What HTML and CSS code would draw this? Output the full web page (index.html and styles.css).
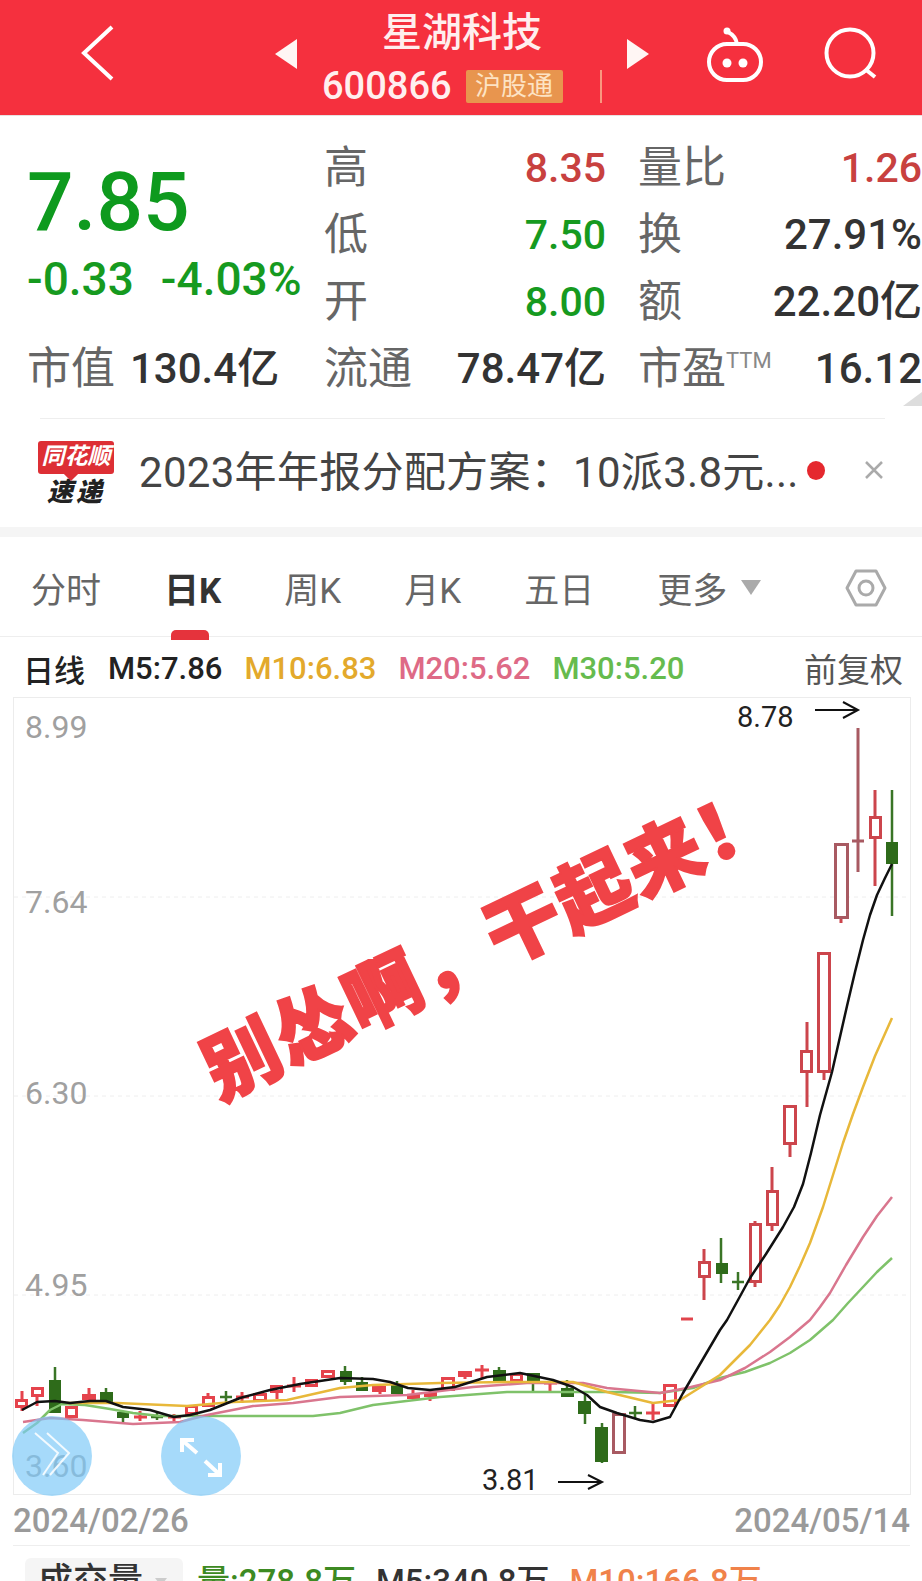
FILE: index.html
```html
<!DOCTYPE html>
<html lang="zh-CN">

<head>
    <meta charset="UTF-8">
    <meta name="viewport" content="width=device-width, initial-scale=1.0">
    <title>星湖科技</title>
    <link rel="stylesheet" href="styles.css">
</head>

<body>
    <div class="page">
        <header class="topbar">
            <svg class="back" width="33" height="56" viewBox="0 0 33 56">
                <path d="M31 2 L3 28 L31 54" />
            </svg>
            <svg class="prev" width="22" height="30" viewBox="0 0 22 30">
                <polygon points="22,0 0,15 22,30" />
            </svg>
            <div class="stock">
                <div class="stock-name">星湖科技</div>
                <div class="stock-sub">
                    <span class="stock-code">600866</span>
                    <span class="stock-tag">沪股通</span>
                    <span class="stock-divider"></span>
                </div>
            </div>
            <svg class="next" width="22" height="30" viewBox="0 0 22 30">
                <polygon points="0,0 22,15 0,30" />
            </svg>
            <svg class="robot" width="58" height="56" viewBox="0 0 58 56">
                <rect x="3" y="17" width="52" height="36" rx="18" />
                <path d="M31 17 C30 10 26 7 22 5" />
                <circle class="dot" cx="21" cy="4" r="3.5" />
                <circle class="dot" cx="21" cy="36" r="4.5" />
                <circle class="dot" cx="37" cy="36" r="4.5" />
            </svg>
            <svg class="search" width="56" height="56" viewBox="0 0 56 56">
                <circle cx="26" cy="26" r="23.5" />
                <path d="M41 42 L51 50" />
            </svg>
        </header>

        <section class="quote">
            <div class="price-box">
                <div class="price">7.85</div>
                <div class="change"><span>-0.33</span><span>-4.03%</span></div>
            </div>
            <div class="cell"><span class="label">高</span><span class="value red">8.35</span></div>
            <div class="cell side"><span class="label">量比</span><span class="value red">1.26</span></div>
            <div class="cell"><span class="label">低</span><span class="value green">7.50</span></div>
            <div class="cell side"><span class="label">换</span><span class="value">27.91%</span></div>
            <div class="cell"><span class="label">开</span><span class="value green">8.00</span></div>
            <div class="cell side"><span class="label">额</span><span class="value">22.20亿</span></div>
            <div class="cell first"><span class="label">市值</span><span class="value">130.4亿</span></div>
            <div class="cell"><span class="label">流通</span><span class="value">78.47亿</span></div>
            <div class="cell side"><span class="label">市盈<sup>TTM</sup></span><span class="value">16.12</span></div>
            <div class="corner"></div>
        </section>
        <div class="quote-line"></div>

        <section class="news">
            <div class="logo">
                <div class="logo-top">同花顺</div>
                <div class="logo-bottom">速递</div>
            </div>
            <div class="news-text">2023年年报分配方案：10派3.8元...</div>
            <span class="news-dot"></span>
            <svg class="news-close" width="20" height="20" viewBox="0 0 20 20">
                <path d="M2 2 L18 18 M18 2 L2 18" />
            </svg>
        </section>

        <nav class="tabs">
            <span class="tab">分时</span>
            <span class="tab active">日K</span>
            <span class="tab">周K</span>
            <span class="tab">月K</span>
            <span class="tab">五日</span>
            <span class="tab">更多<i class="caret"></i></span>
            <svg class="settings" width="42" height="40" viewBox="0 0 42 40">
                <polygon points="2,20 11,3 31,3 40,20 31,37 11,37" />
                <circle cx="21" cy="20" r="7" />
            </svg>
        </nav>

        <div class="ma-row">
            <span class="ma-title">日线</span>
            <span class="ma m5">M5:7.86</span>
            <span class="ma m10">M10:6.83</span>
            <span class="ma m20">M20:5.62</span>
            <span class="ma m30">M30:5.20</span>
            <span class="adjust">前复权</span>
        </div>

        <svg class="chart" width="922" height="798" viewBox="0 697 922 798">
            <rect class="frame" x="13.5" y="697.5" width="897" height="797" />
            <path class="grid-line" d="M14 897H910 M14 1096H910 M14 1295H910" />

            <text class="axis" x="25" y="738">8.99</text>
            <text class="axis" x="25" y="913">7.64</text>
            <text class="axis" x="25" y="1104">6.30</text>
            <text class="axis" x="25" y="1296">4.95</text>
            <text class="axis" x="25" y="1477">3.60</text>

            <text class="slogan" x="492" y="980" transform="rotate(-25.5 466 953)">别怂啊，干起来！</text>

            <!-- wicks -->
            <path class="wick up-bright" d="M22 1391V1411 M37 1387V1406 M89 1388V1400 M140 1411V1421 M134 1417H147 M174 1414V1421 M168 1417H181 M208 1393V1400 M242 1392V1403 M236 1397H249 M277 1390V1399 M294 1377V1392 M287 1386H301 M465 1371V1379 M482 1365V1379 M475 1370H489 M430 1392V1401 M413 1390V1399 M380 1392V1394 M550 1382V1391 M544 1383H557 M653 1402V1420 M646 1413H660" />
            <path class="wick up" d="M704 1249V1300 M755 1221V1287 M772 1167V1231 M790 1145V1157 M807 1022V1107 M824 1073V1080 M841 919V923 M875 790V886" />
            <path class="wick up-dim" d="M858 728V872 M852 841H864" />
            <path class="dash" d="M681 1319H693" />
            <path class="wick down" d="M55 1367V1380 M106 1388V1404 M123 1418V1422 M157 1413V1420 M151 1417H163 M226 1391V1403 M220 1397H232 M345 1366V1385 M362 1377V1382 M397 1381V1385 M499 1367V1370 M533 1382V1391 M567 1380V1388 M585 1394V1424 M602 1423V1463 M635 1406V1418 M629 1413H642 M721 1238V1283 M738 1272V1290 M732 1282H744 M892 790V916" />

            <!-- green bodies -->
            <g class="body-down">
                <rect x="49" y="1380" width="12" height="33" />
                <rect x="100" y="1392" width="13" height="10" />
                <rect x="117" y="1412" width="12" height="6" />
                <rect x="340" y="1371" width="12" height="11" />
                <rect x="356" y="1382" width="12" height="9" />
                <rect x="391" y="1385" width="12" height="9" />
                <rect x="493" y="1370" width="13" height="12" />
                <rect x="527" y="1373" width="13" height="9" />
                <rect x="561" y="1388" width="13" height="9" />
                <rect x="578" y="1401" width="13" height="13" />
                <rect x="595" y="1427" width="13" height="35" />
                <rect x="716" y="1263" width="12" height="11" />
                <rect x="886" y="842" width="12" height="22" />
            </g>

            <!-- red bodies -->
            <g class="body-up up-bright">
                <rect x="16.5" y="1400.5" width="10" height="6" />
                <rect x="32.5" y="1388.5" width="10" height="7" />
                <rect x="66.5" y="1407.5" width="10" height="9" />
                <rect x="83.5" y="1395.5" width="11" height="3" class="solid" />
                <rect x="186.5" y="1406.5" width="10" height="7" />
                <rect x="203.5" y="1397.5" width="10" height="8" />
                <rect x="254.5" y="1394.5" width="11" height="6" />
                <rect x="271.5" y="1386.5" width="10" height="5" />
                <rect x="306.5" y="1380.5" width="10" height="5" />
                <rect x="322.5" y="1371.5" width="11" height="5" />
                <rect x="373.5" y="1387.5" width="11" height="3" />
                <rect x="408.5" y="1395.5" width="10" height="2" class="solid" />
                <rect x="425.5" y="1393.5" width="10" height="2" class="solid" />
                <rect x="442.5" y="1378.5" width="11" height="11" />
                <rect x="459.5" y="1372.5" width="11" height="3" />
                <rect x="511.5" y="1374.5" width="10" height="6" />
                <rect x="664.5" y="1385.5" width="11" height="20" />
            </g>
            <g class="body-up up">
                <rect x="699.5" y="1262.5" width="10" height="14" />
                <rect x="750.5" y="1224.5" width="10" height="57" />
                <rect x="767.5" y="1191.5" width="10" height="33" />
                <rect x="784.5" y="1106.5" width="11" height="37" />
                <rect x="801.5" y="1051.5" width="10" height="20" />
                <rect x="818.5" y="953.5" width="11" height="118" />
                <rect x="870.5" y="817.5" width="10" height="20" />
            </g>
            <g class="body-up up-dim">
                <rect x="613.5" y="1414.5" width="11" height="38" />
                <rect x="835.5" y="844.5" width="12" height="73" />
            </g>

            <!-- moving averages -->
            <polyline class="ma-line l30" points="23,1433 37,1423 50,1410 62,1404 85,1405 110,1409 133,1413 160,1416 207,1416 313,1416 340,1413 373,1405 440,1397 507,1392 573,1392 613,1392 660,1393 693,1388 720,1378 745,1372 770,1363 790,1353 810,1340 833,1320 848,1303 863,1287 877,1272 892,1258" />
            <polyline class="ma-line l20" points="23,1422 50,1418 83,1420 133,1424 180,1422 207,1415 253,1406 293,1403 340,1397 407,1395 473,1387 527,1383 583,1383 607,1388 660,1393 687,1388 720,1380 745,1368 770,1352 790,1337 810,1320 820,1307 830,1293 846,1265 863,1237 877,1216 892,1197" />
            <polyline class="ma-line l10" points="67,1403 117,1403 187,1406 233,1402 287,1400 340,1388 373,1385 440,1383 507,1382 573,1382 607,1392 653,1403 680,1400 720,1375 750,1345 770,1320 780,1305 790,1287 800,1266 810,1243 823,1207 833,1175 843,1143 853,1114 863,1087 875,1056 892,1018" />
            <polyline class="ma-line l5" points="22,1410 37,1402 55,1401 70,1403 90,1401 106,1401 123,1407 150,1410 174,1417 190,1415 210,1410 240,1398 270,1390 300,1384 340,1378 373,1379 390,1382 408,1388 430,1390 455,1387 487,1377 520,1373 553,1380 573,1387 587,1395 600,1407 617,1413 640,1420 653,1422 670,1417 683,1393 720,1330 727,1320 738,1300 750,1278 766,1254 783,1227 794,1207 803,1184 811,1153 820,1115 832,1072 847,1006 855,972 863,940 870,915 877,895 885,878 892,864" />

            <!-- high and low marks -->
            <text class="mark" x="737" y="727">8.78</text>
            <path class="mark-arrow" d="M815 710H858 M843 702L858 710L843 718" />
            <text class="mark" x="482" y="1490">3.81</text>
            <path class="mark-arrow" d="M558 1482H602 M588 1475L602 1482L588 1489" />

            <!-- floating buttons -->
            <circle class="float" cx="52" cy="1456" r="40" />
            <circle class="float" cx="201" cy="1456" r="40" />
            <path class="float-icon thin" d="M35 1433L58 1453L43 1475 M47 1433L69 1453L50 1475" />
            <path class="float-icon" d="M197 1453L183 1441 M194 1440H182V1452 M205 1461L219 1474 M220 1463V1475H208" />
        </svg>

        <div class="dates">
            <span>2024/02/26</span>
            <span>2024/05/14</span>
        </div>

        <div class="volume">
            <div class="volume-select">成交量<i class="caret small"></i></div>
            <span class="vol green-dark">量:278.8万</span>
            <span class="vol">M5:340.8万</span>
            <span class="vol orange">M10:166.8万</span>
        </div>
    </div>
</body>

</html>
```

FILE: styles.css
```css
body {
    margin: 0;
    background-color: white;
    font-family: Roboto, "Noto Sans CJK SC", sans-serif;
}

.page {
    width: 922px;
    height: 1581px;
    overflow: hidden;
}

/* top bar */
.topbar {
    display: flex;
    align-items: flex-start;
    height: 116px;
    background-color: #f5303e;
    border-bottom: 1px solid #e8e0e0;
    box-sizing: border-box;
    color: white;
}

.back {
    margin: 25px 0 0 81px;
    fill: none;
    stroke: white;
    stroke-width: 4;
}

.prev {
    margin: 39px 0 0 161px;
    fill: #fff6f4;
}

.next {
    margin-top: 39px;
    fill: #fff6f4;
}

.stock {
    width: 330px;
    padding-top: 8px;
}

.stock-name {
    height: 50px;
    font-size: 40px;
    line-height: 50px;
    font-weight: 500;
    text-align: center;
    color: #ffeeee;
}

.stock-sub {
    display: flex;
    align-items: center;
    height: 40px;
    margin-top: 8px;
    padding-left: 25px;
}

.stock-code {
    font-size: 38px;
    font-weight: 500;
    color: #ffefef;
}

.stock-tag {
    margin-left: 14px;
    width: 97px;
    height: 33px;
    background-color: #e8954e;
    color: #fde3c4;
    font-size: 26px;
    line-height: 33px;
    text-align: center;
    border-radius: 2px;
}

.stock-divider {
    margin-left: 37px;
    width: 2px;
    height: 33px;
    background-color: #f9977f;
}

.robot {
    margin: 27px 0 0 57px;
    fill: none;
    stroke: white;
    stroke-width: 4;
}

.robot .dot {
    fill: white;
    stroke: none;
}

.search {
    margin: 27px 0 0 60px;
    fill: none;
    stroke: white;
    stroke-width: 4;
}

/* quote */
.quote {
    position: relative;
    display: grid;
    grid-template-columns: 324px 282px 316px;
    grid-auto-rows: 67px;
    padding-top: 18px;
}

.price-box {
    grid-row: span 3;
    padding-left: 27px;
}

.price {
    height: 123px;
    font-size: 82px;
    line-height: 136px;
    font-weight: 500;
    color: #0e9a1e;
}

.change {
    display: flex;
    gap: 27px;
    font-size: 46px;
    line-height: 44px;
    font-weight: 500;
    white-space: nowrap;
    color: #169a1f;
}

.cell {
    display: flex;
    justify-content: space-between;
    align-items: center;
}

.cell.first {
    justify-content: flex-start;
    gap: 15px;
    padding-left: 27px;
}

.cell.side {
    padding-left: 32px;
}

.label {
    margin-top: -8px;
    font-size: 44px;
    color: #666;
}

.label sup {
    font-size: 22px;
    line-height: 0;
    vertical-align: 16px;
    color: #888;
}

.value {
    font-size: 42px;
    line-height: 44px;
    font-weight: 500;
    color: #333;
}

.value.red {
    font-size: 41px;
    color: #c8413f;
}

.value.green {
    font-size: 41px;
    color: #169a1f;
}

.corner {
    position: absolute;
    right: 0;
    top: 276px;
    width: 19px;
    height: 14px;
    background-color: #ddd;
    clip-path: polygon(100% 0, 100% 100%, 0 100%);
}

.quote-line {
    height: 1px;
    margin: 16px 37px 0 40px;
    background-color: #eee;
}

/* news strip */
.news {
    display: flex;
    align-items: center;
    height: 118px;
    padding: 0 0 4px 38px;
    box-sizing: border-box;
    border-bottom: 10px solid #f5f5f5;
}

.logo {
    width: 76px;
    margin-top: 4px;
    text-align: center;
}

.logo-top {
    position: relative;
    height: 33px;
    background-color: #dd2f35;
    color: white;
    font-size: 23px;
    line-height: 32px;
    font-weight: 700;
    font-style: italic;
    border-radius: 3px;
}

.logo-top::after {
    content: "";
    position: absolute;
    left: 28px;
    bottom: -5px;
    width: 10px;
    height: 10px;
    background-color: #dd2f35;
    transform: rotate(45deg);
}

.logo-bottom {
    margin-top: 4px;
    font-size: 26px;
    line-height: 28px;
    font-weight: 900;
    font-style: italic;
    letter-spacing: 3px;
    color: #222;
}

.news-text {
    width: 668px;
    margin: -5px 0 0 25px;
    font-size: 42px;
    letter-spacing: 0.3px;
    white-space: nowrap;
    color: #444;
}

.news-dot {
    width: 18px;
    height: 19px;
    margin-top: -2px;
    border-radius: 50%;
    background-color: #e5282e;
}

.news-close {
    margin: -2px 0 0 39px;
    fill: none;
    stroke: #aaa;
    stroke-width: 2.5;
}

/* tabs */
.tabs {
    display: flex;
    align-items: center;
    gap: 63px;
    height: 100px;
    padding: 2px 0 0 31px;
    border-bottom: 1px solid #eee;
    box-sizing: border-box;
}

.tab {
    position: relative;
    font-size: 35px;
    color: #666;
    display: flex;
    align-items: center;
}

.tab.active {
    color: #333;
    font-weight: 700;
}

.tab.active::after {
    content: "";
    position: absolute;
    left: 7px;
    bottom: -27px;
    width: 38px;
    height: 10px;
    background-color: #e5333c;
    border-radius: 5px 5px 0 0;
}

.caret {
    display: inline-block;
    margin-left: 14px;
    width: 0;
    height: 0;
    border-left: 10px solid transparent;
    border-right: 10px solid transparent;
    border-top: 15px solid #aaa;
}

.caret.small {
    margin-left: 12px;
    border-left-width: 6px;
    border-right-width: 6px;
    border-top: 8px solid #ccc;
}

.settings {
    margin-left: auto;
    margin-right: 35px;
    fill: none;
    stroke: #aaa;
    stroke-width: 3;
    stroke-linejoin: round;
}

/* moving average legend */
.ma-row {
    display: flex;
    align-items: center;
    gap: 22px;
    height: 60px;
    padding: 2px 19px 0 23px;
    box-sizing: border-box;
    font-size: 31px;
    font-weight: 500;
}

.ma-title {
    margin-right: 1px;
    color: #222;
}

.ma.m5 {
    color: #222;
}

.ma.m10 {
    color: #e3a92c;
}

.ma.m20 {
    color: #de6a86;
}

.ma.m30 {
    color: #66bb4e;
}

.adjust {
    margin-left: auto;
    font-size: 33px;
    font-weight: 400;
    color: #555;
}

/* chart */
.chart {
    display: block;
    overflow: visible;
}

.frame {
    fill: white;
    stroke: #ececec;
    stroke-width: 1;
}

.grid-line {
    fill: none;
    stroke: #eee;
    stroke-width: 1;
    stroke-dasharray: 4 4;
}

.axis {
    font-size: 32px;
    fill: #a0a0a0;
}

.slogan {
    font-family: "Noto Sans CJK SC", sans-serif;
    font-size: 76px;
    font-weight: 900;
    text-anchor: middle;
    fill: #f04347;
    stroke: #f04347;
    stroke-width: 2;
    letter-spacing: 2px;
}

.wick {
    fill: none;
    stroke-width: 3;
}

.wick.up-bright {
    stroke: #e5434c;
}

.wick.up {
    stroke: #cc454c;
}

.wick.up-dim {
    stroke: #a85a62;
}

.wick.down {
    stroke: #3a7526;
    stroke-width: 2.5;
}

.dash {
    fill: none;
    stroke: #e0444c;
    stroke-width: 3;
}

.body-down rect {
    fill: #2e6b1a;
}

.body-up rect {
    fill: white;
    stroke-width: 3;
}

.body-up.up-bright rect {
    stroke: #e5434c;
}

.body-up.up rect {
    stroke: #cc454c;
}

.body-up.up-dim rect {
    stroke: #a85a62;
}

.body-up rect.solid {
    fill: #e5434c;
}

.ma-line {
    fill: none;
    stroke-linejoin: round;
    stroke-width: 2.5;
}

.ma-line.l5 {
    stroke: #111;
}

.ma-line.l10 {
    stroke: #e8b83a;
}

.ma-line.l20 {
    stroke: #d9768e;
}

.ma-line.l30 {
    stroke: #7fc26a;
}

.mark {
    font-size: 29px;
    fill: #222;
}

.mark-arrow {
    fill: none;
    stroke: #111;
    stroke-width: 2;
}

.float {
    fill: rgba(124, 200, 248, 0.68);
}

.float-icon {
    fill: none;
    stroke: white;
    stroke-width: 4;
}

.float-icon.thin {
    stroke-width: 2;
    stroke-opacity: 0.85;
}

/* dates and volume */
.dates {
    display: flex;
    justify-content: space-between;
    align-items: center;
    height: 50px;
    padding: 0 12px 0 13px;
    font-size: 33px;
    font-weight: 500;
    color: #9a9a9a;
}

.volume {
    display: flex;
    align-items: flex-start;
    height: 60px;
    margin: 0 12px 0 13px;
    padding: 12px 0 0 12px;
    border-top: 1px solid #eee;
    box-sizing: border-box;
    font-size: 33px;
    font-weight: 500;
    color: #333;
}

.volume-select {
    display: flex;
    align-items: center;
    width: 158px;
    height: 48px;
    padding: 0 0 0 13px;
    box-sizing: border-box;
    background-color: #f5f5f5;
    border-radius: 6px;
    font-size: 35px;
    line-height: 48px;
}

.vol {
    margin-left: 20px;
    line-height: 48px;
}

.vol.green-dark {
    margin-left: 14px;
    color: #3d8a22;
}

.vol.orange {
    color: #f0824a;
}
```
